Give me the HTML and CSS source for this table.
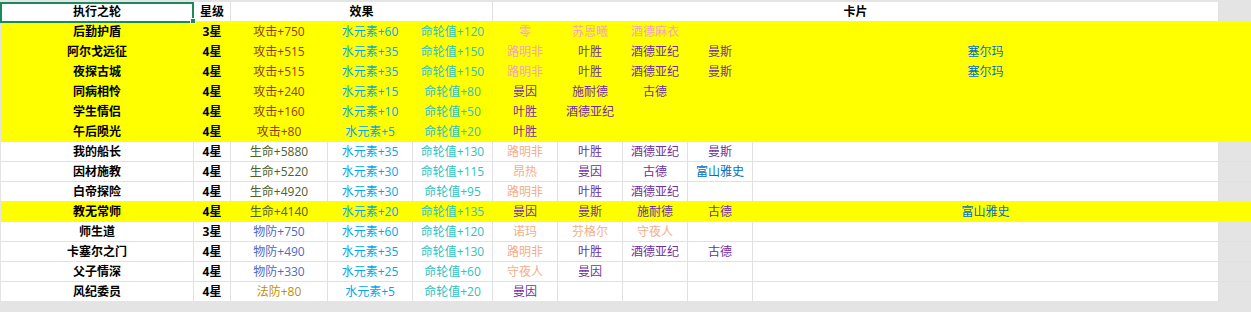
FILE: index.html
```html
<!DOCTYPE html>
<html lang="zh-CN">
<head>
<meta charset="utf-8">
<title>执行之轮</title>
<link rel="stylesheet" href="styles.css">
</head>
<body>
<div class="sheet">
  <div class="hdr">
    <div class="c sel">执行之轮<span class="selbox"></span><span class="handle"></span></div>
    <div class="c">星级</div>
    <div class="c">效果</div>
    <div class="c">卡片</div>
  </div>

  <div class="row y">
    <div class="c n">后勤护盾</div><div class="c n">3星</div><div class="c atk">攻击+750</div><div class="c wat">水元素+60</div><div class="c fate">命轮值+120</div><div class="c pink">零</div><div class="c pink">苏恩曦</div><div class="c pink">酒德麻衣</div><div class="c"></div><div class="c"></div>
  </div>
  <div class="row y">
    <div class="c n">阿尔戈远征</div><div class="c n">4星</div><div class="c atk">攻击+515</div><div class="c wat">水元素+35</div><div class="c fate">命轮值+150</div><div class="c pink">路明非</div><div class="c pur">叶胜</div><div class="c pur">酒德亚纪</div><div class="c pur">曼斯</div><div class="c blu">塞尔玛</div>
  </div>
  <div class="row y">
    <div class="c n">夜探古城</div><div class="c n">4星</div><div class="c atk">攻击+515</div><div class="c wat">水元素+35</div><div class="c fate">命轮值+150</div><div class="c pink">路明非</div><div class="c pur">叶胜</div><div class="c pur">酒德亚纪</div><div class="c pur">曼斯</div><div class="c blu">塞尔玛</div>
  </div>
  <div class="row y">
    <div class="c n">同病相怜</div><div class="c n">4星</div><div class="c atk">攻击+240</div><div class="c wat">水元素+15</div><div class="c fate">命轮值+80</div><div class="c pur">曼因</div><div class="c pur">施耐德</div><div class="c pur">古德</div><div class="c"></div><div class="c"></div>
  </div>
  <div class="row y">
    <div class="c n">学生情侣</div><div class="c n">4星</div><div class="c atk">攻击+160</div><div class="c wat">水元素+10</div><div class="c fate">命轮值+50</div><div class="c pur">叶胜</div><div class="c pur">酒德亚纪</div><div class="c"></div><div class="c"></div><div class="c"></div>
  </div>
  <div class="row y">
    <div class="c n">午后陨光</div><div class="c n">4星</div><div class="c atk">攻击+80</div><div class="c wat">水元素+5</div><div class="c fate">命轮值+20</div><div class="c pur">叶胜</div><div class="c"></div><div class="c"></div><div class="c"></div><div class="c"></div>
  </div>

  <div class="row ay">
    <div class="c n">我的船长</div><div class="c n">4星</div><div class="c hp">生命+5880</div><div class="c wat">水元素+35</div><div class="c fate">命轮值+130</div><div class="c peach">路明非</div><div class="c pur">叶胜</div><div class="c pur">酒德亚纪</div><div class="c pur">曼斯</div><div class="c"></div>
  </div>
  <div class="row">
    <div class="c n">因材施教</div><div class="c n">4星</div><div class="c hp">生命+5220</div><div class="c wat">水元素+30</div><div class="c fate">命轮值+115</div><div class="c peach">昂热</div><div class="c pur">曼因</div><div class="c pur">古德</div><div class="c blu">富山雅史</div><div class="c"></div>
  </div>
  <div class="row">
    <div class="c n">白帝探险</div><div class="c n">4星</div><div class="c hp">生命+4920</div><div class="c wat">水元素+30</div><div class="c fate">命轮值+95</div><div class="c peach">路明非</div><div class="c pur">叶胜</div><div class="c pur">酒德亚纪</div><div class="c"></div><div class="c"></div>
  </div>

  <div class="row y">
    <div class="c n">教无常师</div><div class="c n">4星</div><div class="c hp">生命+4140</div><div class="c wat">水元素+20</div><div class="c fate">命轮值+135</div><div class="c pur">曼因</div><div class="c pur">曼斯</div><div class="c pur">施耐德</div><div class="c pur">古德</div><div class="c blu">富山雅史</div>
  </div>

  <div class="row ay">
    <div class="c n">师生道</div><div class="c n">3星</div><div class="c def">物防+750</div><div class="c wat">水元素+60</div><div class="c fate">命轮值+120</div><div class="c peach">诺玛</div><div class="c peach">芬格尔</div><div class="c peach">守夜人</div><div class="c"></div><div class="c"></div>
  </div>
  <div class="row">
    <div class="c n">卡塞尔之门</div><div class="c n">4星</div><div class="c def">物防+490</div><div class="c wat">水元素+35</div><div class="c fate">命轮值+130</div><div class="c peach">路明非</div><div class="c pur">叶胜</div><div class="c pur">酒德亚纪</div><div class="c pur">古德</div><div class="c"></div>
  </div>
  <div class="row">
    <div class="c n">父子情深</div><div class="c n">4星</div><div class="c def">物防+330</div><div class="c wat">水元素+25</div><div class="c fate">命轮值+60</div><div class="c peach">守夜人</div><div class="c pur">曼因</div><div class="c"></div><div class="c"></div><div class="c"></div>
  </div>
  <div class="row">
    <div class="c n">风纪委员</div><div class="c n">4星</div><div class="c mdef">法防+80</div><div class="c wat">水元素+5</div><div class="c fate">命轮值+20</div><div class="c pur">曼因</div><div class="c"></div><div class="c"></div><div class="c"></div><div class="c"></div>
  </div>
</div>
</body>
</html>
```

FILE: styles.css
```css
* { box-sizing: border-box; }

html, body {
  margin: 0;
  padding: 0;
  background: #e4e4e4;
}

body {
  font-family: "Open Sans", "Noto Sans CJK SC", sans-serif;
  font-size: 12px;
  color: #000;
  width: 1251px;
  height: 312px;
  overflow: hidden;
}

.sheet {
  margin-top: 2px;
  padding-left: 1px;
}

.hdr {
  display: grid;
  grid-template-columns: 193px 37px 262px 726px;
  height: 19px;
}

.hdr .c {
  background: #fff;
  font-weight: bold;
}

.row {
  display: grid;
  grid-template-columns: 193px 37px 97px 85px 80px 65px 65px 65px 65px 466px;
  height: 20px;
  border-top: 1px solid #e1e1e1;
}

.c {
  display: flex;
  align-items: center;
  justify-content: center;
  white-space: nowrap;
  background: #fff;
  border-right: 1px solid #e1e1e1;
  line-height: 1;
  padding-top: 1px;
}

.row.y {
  background: #ffff00;
  border-top-color: #ffff00;
}

.row.y .c {
  background: transparent;
  border-right-color: transparent;
}

.row.ay {
  border-top-color: #ffff00;
}

.n { font-weight: bold; }

.atk { color: #923c1a; }
.hp { color: #4f6228; }
.def { color: #4a6cc8; }
.mdef { color: #bf8f00; }
.wat { color: #00a8ec; }
.fate { color: #2ec2c2; }
.pink { color: #f2a4c6; }
.peach { color: #f5ad88; }
.pur { color: #7030a0; }
.blu { color: #0070c0; }

.sel {
  position: relative;
}

.selbox {
  position: absolute;
  left: -1px;
  top: 0;
  width: 194px;
  height: 21px;
  border: 2px solid #1b8a5a;
  z-index: 2;
}

.handle {
  position: absolute;
  left: 189px;
  top: 16px;
  width: 6px;
  height: 6px;
  background: #1b8a5a;
  border: 1px solid #fff;
  z-index: 3;
}
```
